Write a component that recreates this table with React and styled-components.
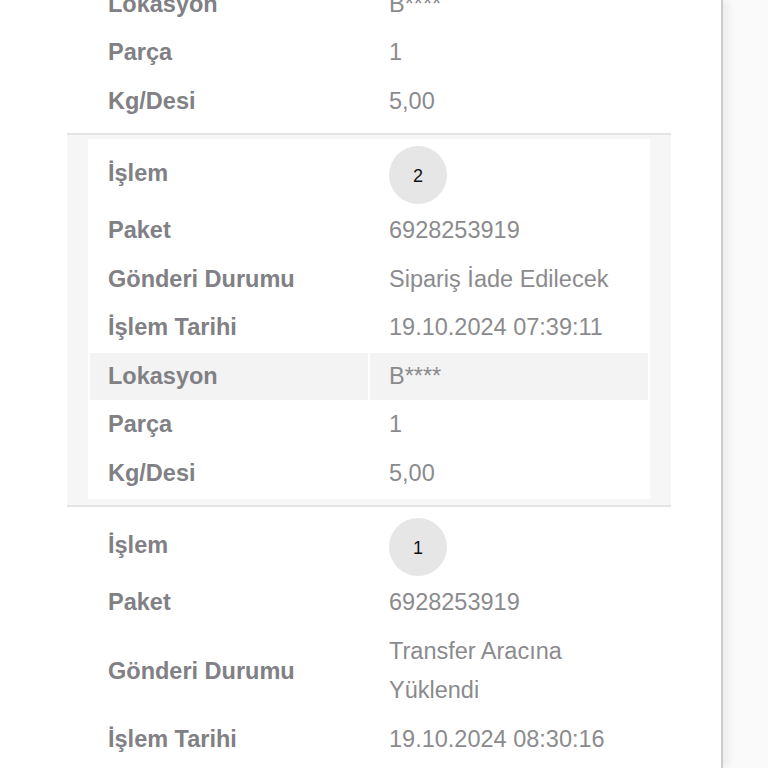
import React from "react";
import styled, { createGlobalStyle } from "styled-components";

const GlobalStyle = createGlobalStyle`
  html, body {
    margin: 0;
    padding: 0;
    background: #fafafa;
  }
  body {
    font-family: "Liberation Sans", Arial, Helvetica, sans-serif;
  }
`;

const movements = [
  {
    id: "top",
    partial: true,
    rows: [
      { label: "Lokasyon", value: "B****" },
      { label: "Parça", value: "1" },
      { label: "Kg/Desi", value: "5,00" },
    ],
  },
  {
    id: 2,
    highlighted: true,
    rows: [
      { label: "İşlem", step: 2 },
      { label: "Paket", value: "6928253919" },
      { label: "Gönderi Durumu", value: "Sipariş İade Edilecek" },
      { label: "İşlem Tarihi", value: "19.10.2024 07:39:11" },
      { label: "Lokasyon", value: "B****", hovered: true },
      { label: "Parça", value: "1" },
      { label: "Kg/Desi", value: "5,00" },
    ],
  },
  {
    id: 1,
    rows: [
      { label: "İşlem", step: 1 },
      { label: "Paket", value: "6928253919" },
      { label: "Gönderi Durumu", value: ["Transfer Aracına", "Yüklendi"] },
      { label: "İşlem Tarihi", value: "19.10.2024 08:30:16" },
      { label: "Lokasyon", value: "B****" },
      { label: "Parça", value: "1" },
      { label: "Kg/Desi", value: "5,00" },
    ],
  },
];

const App = () => {
  return (
    <>
      <GlobalStyle />
      <Viewport>
        <Panel>
          <MovementList>
            {movements.map((block) => (
              <MovementBlock
                key={block.id}
                $highlighted={block.highlighted}
                $partial={block.partial}
              >
                <DetailTable>
                  {block.rows.map((row, i) => (
                    <DetailRow key={i} $tall={row.step !== undefined}>
                      <LabelCell $hovered={row.hovered}>{row.label}</LabelCell>
                      <ValueCell $hovered={row.hovered}>
                        {row.step !== undefined ? (
                          <StepBadge>{row.step}</StepBadge>
                        ) : Array.isArray(row.value) ? (
                          <MultiLine>
                            {row.value.map((line) => (
                              <span key={line}>{line}</span>
                            ))}
                          </MultiLine>
                        ) : (
                          row.value
                        )}
                      </ValueCell>
                    </DetailRow>
                  ))}
                </DetailTable>
              </MovementBlock>
            ))}
          </MovementList>
        </Panel>
      </Viewport>
    </>
  );
};

export default App;

const Viewport = styled.div`
  width: 768px;
  height: 768px;
  overflow: hidden;
  background: #fafafa;
  display: flex;
`;

const Panel = styled.div`
  width: 721px;
  flex-shrink: 0;
  background: #ffffff;
  border-right: 2px solid #cdcdcd;
  box-shadow: 5px 0 8px rgba(0, 0, 0, 0.06);
`;

const MovementList = styled.div`
  display: flex;
  flex-direction: column;
  margin: -25px 0 0 67px;
  width: 604px;
`;

const MovementBlock = styled.div`
  background: ${(p) => (p.$highlighted ? "#f6f6f6" : "#ffffff")};
  border-top: ${(p) => (p.$partial ? "none" : "2px solid #e4e4e4")};
  padding: ${(p) => (p.$partial ? "4px 21px 6px" : "4px 21px 6px")};
`;

const DetailTable = styled.div`
  display: flex;
  flex-direction: column;
  gap: 2px;
  padding: 2px;
  background: #ffffff;
`;

const DetailRow = styled.div`
  display: grid;
  grid-template-columns: 1fr 1fr;
  column-gap: 2px;
  min-height: ${(p) => (p.$tall ? "65px" : "46.5px")};
`;

const Cell = styled.div`
  display: flex;
  align-items: center;
  font-size: 23.5px;
  background: ${(p) => (p.$hovered ? "#f3f3f3" : "transparent")};
`;

const LabelCell = styled(Cell)`
  padding-left: 18px;
  font-weight: bold;
  color: #808085;
`;

const ValueCell = styled(Cell)`
  padding-left: 19px;
  color: #8b8b8e;
`;

const MultiLine = styled.div`
  display: flex;
  flex-direction: column;
  line-height: 39px;
  padding: 4px 0 4px;
`;

const StepBadge = styled.div`
  width: 58px;
  height: 58px;
  margin-top: 4px;
  border-radius: 50%;
  background: #e6e6e6;
  color: #111111;
  font-size: 18px;
  display: flex;
  align-items: center;
  justify-content: center;
  padding-top: 3px;
  box-sizing: border-box;
`;
